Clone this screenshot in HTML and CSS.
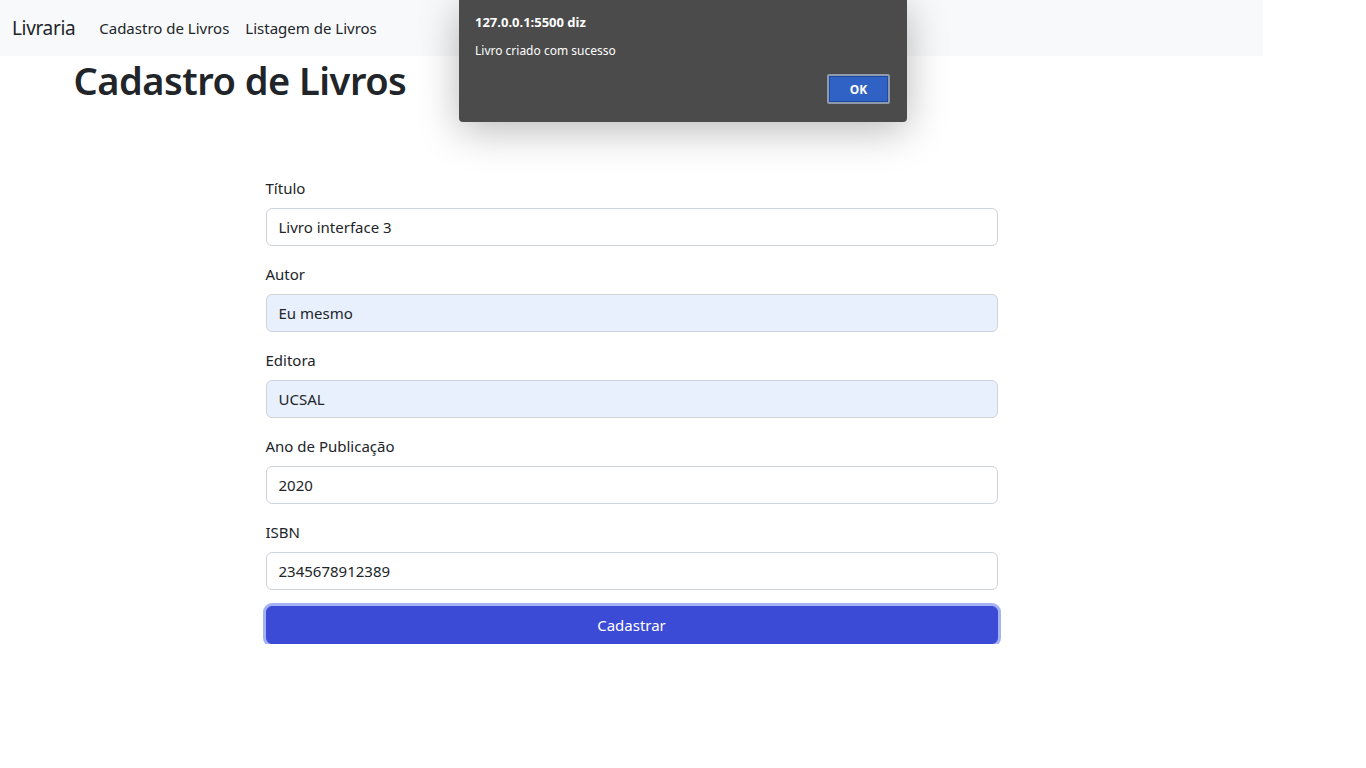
FILE: index.html
```html
<!DOCTYPE html>
<html lang="pt-br">
<head>
<meta charset="utf-8">
<title>Livraria</title>
<link rel="stylesheet" href="styles.css">
</head>
<body>
<div class="page">
  <nav class="navbar">
    <a class="brand" href="#">Livraria</a>
    <ul class="nav">
      <li><a href="#">Cadastro de Livros</a></li>
      <li><a href="#">Listagem de Livros</a></li>
    </ul>
  </nav>
  <main class="container">
    <h1 class="title">Cadastro de Livros</h1>
    <form class="book-form">
      <div class="group">
        <label>Título</label>
        <input class="field" type="text" value="Livro interface 3">
      </div>
      <div class="group">
        <label>Autor</label>
        <input class="field autofill" type="text" value="Eu mesmo">
      </div>
      <div class="group">
        <label>Editora</label>
        <input class="field autofill" type="text" value="UCSAL">
      </div>
      <div class="group">
        <label>Ano de Publicação</label>
        <input class="field" type="text" value="2020">
      </div>
      <div class="group">
        <label>ISBN</label>
        <input class="field" type="text" value="2345678912389">
      </div>
      <button class="submit" type="button">Cadastrar</button>
    </form>
  </main>
</div>
<div class="alert-dialog">
  <div class="alert-title">127.0.0.1:5500 diz</div>
  <div class="alert-msg">Livro criado com sucesso</div>
  <div class="alert-actions"><button class="ok" type="button">OK</button></div>
</div>
</body>
</html>
```

FILE: styles.css
```css
* { box-sizing: border-box; }
html, body { margin: 0; padding: 0; background: #fff; }
body {
  font-family: "Noto Sans", "Open Sans", sans-serif;
  color: #212529;
  font-size: 16px;
  line-height: 1.5;
}
.page { width: 1263px; }
.navbar {
  height: 56px;
  background: #f8f9fa;
  display: flex;
  align-items: center;
  padding: 0 12px;
}
.brand {
  font-size: 19px;
  color: #212529;
  text-decoration: none;
  margin-right: 24px;
  letter-spacing: -0.35px;
}
.nav { list-style: none; margin: 0; padding: 0; display: flex; gap: 16px; }
.nav a {
  color: #212529;
  text-decoration: none;
  font-size: 15px;
  letter-spacing: 0;
}
.container {
  width: 1140px;
  margin: 0 auto;
  padding: 0 12px;
}
.title {
  margin: 0;
  font-size: 38px;
  font-weight: 600;
  line-height: 48px;
  letter-spacing: -0.5px;
}
.book-form {
  width: 732px;
  margin: 72px auto 0;
}
.group { margin-bottom: 16px; }
.group label {
  display: block;
  font-size: 15px;
  line-height: 24px;
  margin-bottom: 8px;
}
.field {
  display: block;
  width: 100%;
  height: 38px;
  padding: 6px 12px;
  font-family: inherit;
  font-size: 15px;
  color: #212529;
  background: #fff;
  border: 1px solid #ced4da;
  border-radius: 6px;
  outline: none;
}
.field.autofill { background: #e8f0fe; }
.submit {
  display: block;
  width: 100%;
  height: 38px;
  background: #3b4bd6;
  color: #fff;
  border: 1px solid #3b4bd6;
  border-radius: 6px;
  font-family: inherit;
  font-size: 15px;
  box-shadow: 0 0 0 3px #a6b2f6;
}
.alert-dialog {
  position: absolute;
  left: 459px;
  top: 0;
  width: 448px;
  height: 122px;
  background: #4b4b4b;
  border-radius: 0 0 4px 4px;
  box-shadow: 0 8px 40px rgba(0, 0, 0, 0.28);
  color: #fff;
  padding: 13px 16px 0;
  font-family: "Noto Sans", "Open Sans", sans-serif;
}
.alert-title { font-size: 13px; font-weight: 700; line-height: 18px; }
.alert-msg { font-size: 12px; line-height: 18px; margin-top: 11px; }
.alert-actions { display: flex; justify-content: flex-end; margin-top: 14px; padding-right: 1px; }
.ok {
  width: 63px;
  height: 30px;
  background: #2f62c4;
  color: #fff;
  border: 2px solid #8e9aab;
  box-shadow: inset 0 0 0 1px #1d4aa0;
  border-radius: 2px;
  font-family: inherit;
  font-size: 12px;
  font-weight: 700;
}
```
